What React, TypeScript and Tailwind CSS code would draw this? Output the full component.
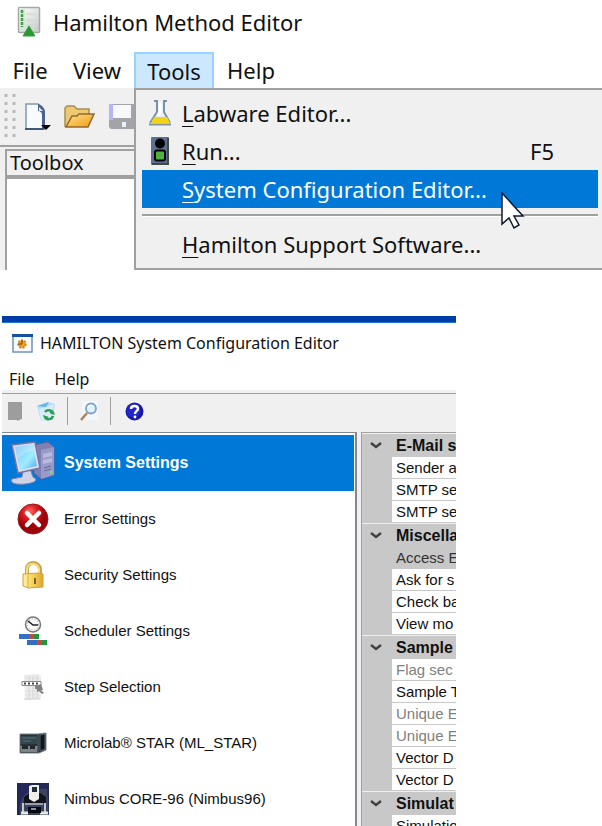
import type { ReactNode } from "react";

const uiFont = "font-['Noto_Sans','Open_Sans',sans-serif]";
const gridFont = "font-['Liberation_Sans',Arial,sans-serif]";

function MethodIcon() {
  return (
    <svg width="24" height="32" viewBox="0 0 24 32" aria-hidden="true">
      <defs>
        <linearGradient id="sheet" x1="0" y1="0" x2="1" y2="1">
          <stop offset="0" stopColor="#fff" />
          <stop offset="1" stopColor="#c3cbc6" />
        </linearGradient>
      </defs>
      <rect x="1.5" y="1.5" width="21" height="25" rx="1" fill="url(#sheet)" stroke="#a3aaa6" strokeWidth="1.5" />
      <rect x="3" y="3" width="5" height="21" fill="#d3ead3" />
      <path d="M5 4v17" stroke="#4f9a52" strokeWidth="2.5" strokeDasharray="3 1" />
      <path d="M9 8h10M9 14h10M9 19h6" stroke="#cdd6cf" />
      <path d="M12 20 18 30H6Z" fill="#259b2b" stroke="#3f9a44" />
    </svg>
  );
}

function NewIcon() {
  return (
    <svg width="28" height="28" viewBox="0 0 28 28" aria-hidden="true">
      <path d="M2 1h12l6 6v19H2Z" fill="#f7fbff" stroke="#8196b3" strokeWidth="1.5" />
      <path d="M14 1c4 1 7 4 7 9v16h-3V12c0-3-2-4-4-4Z" fill="#4c6385" />
      <path d="M15 4v4h4" fill="#dce9f8" />
      <path d="M1 26h19" stroke="#405878" strokeWidth="2" />
      <path d="M17 22h10l-5 5Z" fill="#000" />
    </svg>
  );
}

function OpenIcon() {
  return (
    <svg width="32" height="26" viewBox="0 0 32 26" aria-hidden="true">
      <defs>
        <linearGradient id="folder" x1="0" y1="0" x2="1" y2="1">
          <stop offset="0" stopColor="#ffe28a" />
          <stop offset="1" stopColor="#f19a16" />
        </linearGradient>
      </defs>
      <path d="M1 23V4l2-2h7l3 3h12v6" fill="#ecca72" stroke="#a88d55" strokeWidth="1.5" />
      <path d="M2 23 8 12h5l2-2h15l-6 13Z" fill="url(#folder)" stroke="#95682a" strokeWidth="1.5" />
    </svg>
  );
}

function SaveIcon() {
  return (
    <svg width="28" height="27" viewBox="0 0 28 27" aria-hidden="true">
      <path d="M1 1h26v25H3l-2-2Z" fill="#a4a4a8" />
      <path d="M1 1h4v16H1Z" fill="#b5b3fa" />
      <rect x="5" y="2" width="18" height="13" fill="#f7f8fb" />
      <rect x="14" y="19" width="4" height="5" fill="#e8f1f5" />
    </svg>
  );
}

function FlaskIcon() {
  return (
    <svg width="24" height="26" viewBox="0 0 24 26" aria-hidden="true">
      <path d="M9 2v10L1 23v2h22v-2L16 12V2Z" fill="#e9f1f5" />
      <path d="M9 2v10L2 23M16 2v10l6 11" stroke="#7890a8" strokeWidth="2" fill="none" />
      <path d="M6 17h13l3 6H3Z" fill="#f3d316" />
      <path d="M1 24.500h22" stroke="#8794a0" strokeWidth="2" />
      <path d="M6 1h4M15 1h4" stroke="#7890a8" strokeWidth="2" />
      <path d="M12 3v9l-2 4" stroke="#fff" strokeWidth="3" fill="none" />
    </svg>
  );
}

function SignalIcon() {
  return (
    <svg width="18" height="28" viewBox="0 0 18 28" aria-hidden="true">
      <rect width="18" height="28" rx="1" fill="#5d6f93" />
      <path d="M17 1v26H1" stroke="#3c4e3d" strokeWidth="2" fill="none" />
      <circle cx="9" cy="6.500" r="5" fill="#000" />
      <rect x="4" y="13.500" width="10" height="10" rx="2" fill="#4eb33d" stroke="#000" strokeWidth="2" />
    </svg>
  );
}

function ConfigIcon() {
  return (
    <svg width="21" height="19" viewBox="0 0 21 19" aria-hidden="true">
      <rect x="1" y="1" width="19" height="17" fill="#f7fbff" stroke="#6d93b8" strokeWidth="1.500" />
      <path d="M0 1.500h21" stroke="#1552a0" strokeWidth="3" />
      <circle cx="10" cy="10" r="3.500" fill="#f6a51c" stroke="#d98a1a" strokeWidth="2.500" strokeDasharray="2 1" />
      <path d="M10 6v4H6" stroke="#684018" fill="none" />
    </svg>
  );
}

function RefreshIcon() {
  return (
    <svg width="20" height="21" viewBox="0 0 20 21" aria-hidden="true">
      <path d="m1 5 11-4 7 2-3 16-11 1Z" fill="#b5dcf4" />
      <path d="m1 5 12-4-3 5Z" fill="#5eb8ed" />
      <path d="m3 8 8-2 7-3-4 16-9 1Z" fill="#d9edf8" />
      <path d="M9 11c2-3 7-2 8 1l-3-1M17 15c-1 4-7 4-8 1l3 1" fill="none" stroke="#2c9f58" strokeWidth="2.500" />
    </svg>
  );
}

function SearchIcon() {
  return (
    <svg width="19" height="20" viewBox="0 0 19 20" aria-hidden="true">
      <path d="M2 0h16v19H2Z" fill="#f3f7fc" />
      <path d="m7 12-6 7" stroke="#b48056" strokeWidth="2.500" />
      <circle cx="11" cy="7.500" r="5" fill="#dff3fd" stroke="#809fc4" strokeWidth="1.800" />
      <path d="M8 7c0-2 2-3 4-3" stroke="#fff" fill="none" />
    </svg>
  );
}

function HelpIcon() {
  return (
    <svg width="19" height="19" viewBox="0 0 19 19" aria-hidden="true">
      <circle cx="9.500" cy="9.500" r="9" fill="#1818a8" />
      <circle cx="8.500" cy="8.500" r="7" fill="#2525ce" />
      <path d="M6 7c0-4 7-4 7 0 0 2-3 2-3 5" fill="none" stroke="#fff" strokeWidth="2.400" />
      <circle cx="10" cy="15" r="1.400" fill="#fff" />
    </svg>
  );
}

function ComputerIcon() {
  return (
    <svg width="46" height="44" viewBox="0 0 46 44" aria-hidden="true">
      <defs>
        <linearGradient id="screen" x1="0" y1="0" x2="1" y2="1">
          <stop offset="0" stopColor="#67bdfa" />
          <stop offset="0.600" stopColor="#a1edff" />
          <stop offset="1" stopColor="#4ba9ef" />
        </linearGradient>
      </defs>
      <path d="m24 4 14-3 6 5v28l-13 4-7-6Z" fill="#7f80b4" stroke="#62639b" />
      <path d="m31 9 13-3v28l-13 4Z" fill="#9a9bc9" />
      <path d="m33 13 9-2v4l-9 2Zm0 6 9-2v4l-9 2Z" fill="#b9badd" />
      <path d="m34 27 7-2m-7 5 7-2" stroke="#67689c" />
      <circle cx="41" cy="31" r="1.500" fill="#67e866" />
      <path d="m13 30-1 6-10 2c-3 4 5 6 13 5 10-1 14-4 8-7l-3-8Z" fill="#d2d2e6" stroke="#8081ae" />
      <path d="m2 4 23-3 5 26-22 5Z" fill="#dddded" stroke="#7475a4" strokeWidth="1.500" />
      <path d="m5 6 18-3 4 22-17 4Z" fill="url(#screen)" />
      <path d="m5 6 18-3 1 7c-9 0-12 5-16 8Z" fill="#fff" opacity=".25" />
    </svg>
  );
}

function ErrorIcon() {
  return (
    <svg width="32" height="32" viewBox="0 0 32 32" aria-hidden="true">
      <defs>
        <radialGradient id="red" cx="40%" cy="25%">
          <stop offset="0" stopColor="#ff6760" />
          <stop offset=".5" stopColor="#dc1b20" />
          <stop offset="1" stopColor="#9c0008" />
        </radialGradient>
      </defs>
      <circle cx="16" cy="16" r="15" fill="url(#red)" stroke="#8f2024" />
      <path d="m10 10 12 12m0-12L10 22" stroke="#fff" strokeWidth="4.500" strokeLinecap="round" />
    </svg>
  );
}

function LockIcon() {
  return (
    <svg width="22" height="28" viewBox="0 0 22 28" aria-hidden="true">
      <defs>
        <linearGradient id="brass">
          <stop offset="0" stopColor="#fff4a6" />
          <stop offset=".5" stopColor="#f5d158" />
          <stop offset="1" stopColor="#dca52f" />
        </linearGradient>
      </defs>
      <path d="M5 13V8c0-8 12-8 13 0v5" fill="none" stroke="#c9a550" strokeWidth="4" />
      <path d="M5 13V8c0-7 11-7 12 0v5" fill="none" stroke="#f7df81" strokeWidth="2" />
      <path d="m1 13 16-1 4 1v13l-15 1-5-2Z" fill="url(#brass)" stroke="#cda03b" />
      <path d="M6 14v12" stroke="#d9ad43" />
      <path d="M13 17v6" stroke="#7a6229" strokeWidth="2" />
    </svg>
  );
}

function SchedulerIcon() {
  return (
    <svg width="28" height="30" viewBox="0 0 28 30" aria-hidden="true">
      <circle cx="14" cy="8.500" r="7.500" fill="#fafafa" stroke="#777" strokeWidth="1.500" />
      <circle cx="14" cy="8.500" r="5.500" fill="none" stroke="#999" strokeWidth="1" strokeDasharray="1 2" />
      <path d="m9 5 5 4h5" fill="none" stroke="#222" strokeWidth="1.600" />
      <path d="M0 18h10v5H0Zm8 6h10v5H8Z" fill="#356fc3" />
      <path d="M10 18h5v5h-5Zm8 6h5v5h-5Z" fill="#c54a3f" />
      <path d="M15 18h5v5h-5Zm8 6h5v5h-5Z" fill="#22933e" />
    </svg>
  );
}

function StepIcon() {
  return (
    <svg width="24" height="28" viewBox="0 0 24 28" aria-hidden="true">
      <path d="M3 2 17 1l3 2v23l-16 1Z" fill="#ececec" />
      <path d="M3 26h16M8 3v22m4-22v22m4-22v22" stroke="#d2d2d2" />
      <path d="M4 5h15M4 18h15M4 22h15" stroke="#dadada" strokeDasharray="2 2" />
      <path d="M1 8.500h19v4H1Z" fill="#fff" stroke="#8a8a8a" />
      <path d="M3 10.500h14" stroke="#444" strokeWidth="2" strokeDasharray="2 2" />
      <path d="m14 13 6-2 2 6h-2l3 3-2 1-3-3-2 1v-3h-2Z" fill="#808080" />
    </svg>
  );
}

function StarIcon() {
  return (
    <svg width="28" height="22" viewBox="0 0 28 22" aria-hidden="true">
      <path d="M1 2h18l8-1v17l-7 3H1Z" fill="#263238" stroke="#798286" />
      <path d="M2 4h16v8H2Z" fill="#34464d" />
      <path d="M3 6h14M4 9h8" stroke="#587078" />
      <path d="M1 14h18l-1 6H2Z" fill="#7d8385" />
      <path d="M3 14h6v3H3Zm8 0h5v3h-5Z" fill="#20282b" />
      <path d="M19 2v19M21 3l5-1v15l-5 2Z" fill="#10171b" stroke="#536168" />
    </svg>
  );
}

function NimbusIcon() {
  return (
    <svg width="32" height="32" viewBox="0 0 32 32" aria-hidden="true">
      <rect width="32" height="32" fill="#23285a" />
      <path d="M3 32C0 15 10 4 30 6l2 26Z" fill="#39425f" />
      <path d="m7 14 6-4h10l6 4v6H7Z" fill="#10131c" />
      <path d="m12 3 3-1h7v14l-5 3-5-3Z" fill="#eeeeea" />
      <path d="M15 4h5v5h-5Z" fill="#262b3b" />
      <path d="M6 20v11M28 20v11" stroke="#c5cbd0" strokeWidth="2" />
      <path d="M4 30h7M23 30h8" stroke="#e3e6e8" strokeWidth="3" />
      <path d="M8 20h18v2H8Z" fill="#9aa2a9" />
      <path d="M11 24h13v6H11Z" fill="#070a11" />
      <path d="M14 25h5v2h-5Z" fill="#88929b" />
    </svg>
  );
}

function Chevron() {
  return (
    <svg width="14" height="9" viewBox="0 0 14 9" aria-hidden="true">
      <path d="m2 2 5 4 5-4" fill="none" stroke="#404040" strokeWidth="2.400" />
    </svg>
  );
}

function Cursor() {
  return (
    <svg width="24" height="38" viewBox="0 0 24 38" aria-hidden="true">
      <path d="M1 1v31l7-6 5 10 5-3-5-9h9Z" fill="#fff" stroke="#10182c" strokeWidth="1.500" />
    </svg>
  );
}

function MenuItem({ icon, hot, rest, keys, active }: { icon?: ReactNode; hot: string; rest: string; keys?: string; active?: boolean }) {
  return (
    <button
      role="menuitem"
      className={`flex h-[38px] w-full items-center pr-11 text-left ${active ? "bg-[#0078d7] text-white" : "text-[#111]"}`}
    >
      <span className="flex w-10 shrink-0 items-center justify-center pr-1">{icon}</span>
      <span className="grow whitespace-nowrap">
        <span className="underline decoration-1 underline-offset-4">{hot}</span>
        {rest}
      </span>
      {keys && <span>{keys}</span>}
    </button>
  );
}

function MethodEditor() {
  return (
    <section className={`relative bg-white text-[22px] leading-7 text-[#111] ${uiFont}`}>
      <header className="flex h-[52px] items-center gap-3 pb-2 pl-[17px]">
        <MethodIcon />
        <h1>Hamilton Method Editor</h1>
      </header>
      <nav className="flex h-9">
        <button className="w-[60px] text-center">File</button>
        <button className="w-[74px] text-center">View</button>
        <button className="w-20 border-2 border-b-0 border-[#99d1ff] bg-[#cce8ff] text-center">Tools</button>
        <button className="w-[74px] text-center">Help</button>
      </nav>
      <div className="flex h-[59px] items-center gap-2 border-b-2 border-[#a0a0a0] bg-[#f0f0f0] pl-[3px]">
        <svg width="13" height="50" viewBox="0 0 13 50" aria-hidden="true">
          <path d="M3 2v48M11 2v48" stroke="#b8b8b8" strokeWidth="3" strokeDasharray="3 5" />
        </svg>
        <div className="flex items-center gap-3">
          <button aria-label="New"><NewIcon /></button>
          <button aria-label="Open"><OpenIcon /></button>
          <button aria-label="Save"><SaveIcon /></button>
        </div>
      </div>
      <div className="bg-[#f0f0f0] pl-[5px] pt-[2px]">
        <h2 className="h-7 border-2 border-[#a0a0a0] pl-[3px] text-xl leading-6">Toolbox</h2>
        <div className="h-[93px] border-l-2 border-t-2 border-[#a0a0a0] bg-white" />
      </div>
      <div role="menu" className="absolute left-[134px] right-0 top-[88px] border-y-2 border-l-2 border-[#a0a0a0] bg-[#f0f0f0] pb-[5px] pl-[6px] pr-1 pt-1">
        <MenuItem icon={<FlaskIcon />} hot="L" rest="abware Editor..." />
        <MenuItem icon={<SignalIcon />} hot="R" rest="un..." keys="F5" />
        <MenuItem hot="S" rest="ystem Configuration Editor..." active />
        <div className="mb-2 mt-[6px] h-[3px] border-b border-t-2 border-b-white border-t-[#a0a0a0]" />
        <MenuItem hot="H" rest="amilton Support Software..." />
        <div className="absolute left-[365px] top-[102px]"><Cursor /></div>
      </div>
    </section>
  );
}

const sections: { label: string; icon: ReactNode }[] = [
  { label: "System Settings", icon: <ComputerIcon /> },
  { label: "Error Settings", icon: <ErrorIcon /> },
  { label: "Security Settings", icon: <LockIcon /> },
  { label: "Scheduler Settings", icon: <SchedulerIcon /> },
  { label: "Step Selection", icon: <StepIcon /> },
  { label: "Microlab® STAR (ML_STAR)", icon: <StarIcon /> },
  { label: "Nimbus CORE-96 (Nimbus96)", icon: <NimbusIcon /> },
];

type Row = { label: string; tone?: "dim" | "selected" };

const groups: { title: string; rows: Row[] }[] = [
  { title: "E-Mail s", rows: [{ label: "Sender a" }, { label: "SMTP se" }, { label: "SMTP se" }] },
  {
    title: "Miscella",
    rows: [{ label: "Access E", tone: "selected" }, { label: "Ask for s" }, { label: "Check ba" }, { label: "View mo" }],
  },
  {
    title: "Sample",
    rows: [
      { label: "Flag sec", tone: "dim" },
      { label: "Sample T" },
      { label: "Unique E", tone: "dim" },
      { label: "Unique E", tone: "dim" },
      { label: "Vector D" },
      { label: "Vector D" },
    ],
  },
  { title: "Simulat", rows: [{ label: "Simulatio" }] },
];

const rowTones = {
  plain: "bg-white text-[#111]",
  dim: "bg-white text-[#808080]",
  selected: "bg-[#c8c8c8] text-[#333]",
};

function ConfigurationEditor() {
  return (
    <section className="ml-[2px] mt-[46px] flex min-h-0 w-full max-w-[454px] grow flex-col bg-white text-[#111]">
      <div className="h-[7px] shrink-0 border-b border-[#1976d2] bg-[#003ca6]" />
      <header className={`flex h-10 shrink-0 items-center gap-[7px] pl-[10px] text-base ${uiFont}`}>
        <ConfigIcon />
        <h1>HAMILTON System Configuration Editor</h1>
      </header>
      <nav className={`flex h-[27px] shrink-0 items-center gap-5 pl-[7px] pt-1 text-base ${uiFont}`}>
        <button>File</button>
        <button>Help</button>
      </nav>
      <div className="shrink-0 bg-[#f0f0f0] pt-[3px]">
        <div className="flex h-[39px] items-center border-t border-[#a0a0a0] pb-1 pl-[6px]">
          <button aria-label="Save">
            <svg width="14" height="19" viewBox="0 0 14 19" aria-hidden="true">
              <path d="M0 0h14v17l-5 2v-1H0Z" fill="#9d9d9d" />
            </svg>
          </button>
          <button aria-label="Refresh" className="ml-[14px]"><RefreshIcon /></button>
          <span className="ml-[11px] h-7 w-px bg-[#a0a0a0]" />
          <button aria-label="Search" className="ml-3"><SearchIcon /></button>
          <span className="ml-[11px] h-7 w-px bg-[#a0a0a0]" />
          <button aria-label="Help" className="ml-[14px]"><HelpIcon /></button>
        </div>
      </div>
      <div className={`flex min-h-0 grow gap-1 overflow-hidden bg-[#f0f0f0] ${gridFont}`}>
        <div className="w-[355px] shrink-0 border-r-2 border-t border-[#828790] bg-white pr-px pt-[2px]">
          {sections.map(({ label, icon }, i) => (
            <button
              key={label}
              className={`flex h-14 w-full items-center text-left ${i === 0 ? "bg-[#0078d7] text-base font-bold text-white" : "text-[15px]"}`}
            >
              <span className="flex w-[62px] shrink-0 justify-center">{icon}</span>
              <span>{label}</span>
            </button>
          ))}
        </div>
        <div className="min-w-0 grow overflow-hidden border-l border-t border-[#a0a0a0] bg-[#c8c8c8]">
          {groups.map(({ title, rows }) => (
            <div key={title}>
              <h2 className="flex h-6 items-center border-t border-[#f0f0f0] text-base font-bold">
                <span className="flex w-[34px] shrink-0 pl-[7px]"><Chevron /></span>
                <span className="whitespace-nowrap">{title}</span>
              </h2>
              {rows.map(({ label, tone }, i) => (
                <div
                  key={i}
                  className={`ml-[30px] h-[22px] whitespace-nowrap border-b border-[#c8c8c8] pl-1 text-[15px] leading-[22px] ${rowTones[tone ?? "plain"]}`}
                >
                  {label}
                </div>
              ))}
            </div>
          ))}
        </div>
      </div>
    </section>
  );
}

export default function App() {
  return (
    <main className="flex h-screen flex-col overflow-hidden bg-white">
      <MethodEditor />
      <ConfigurationEditor />
    </main>
  );
}
